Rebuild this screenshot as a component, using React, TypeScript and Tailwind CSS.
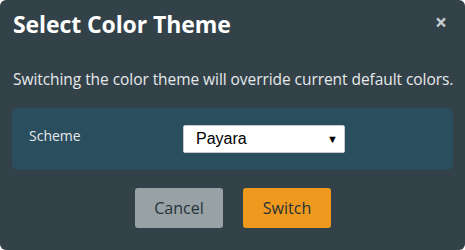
export default function App() {
  return (
    <div className="w-[465px] h-[250px] bg-[#334249] rounded-[6px] overflow-hidden font-['Open_Sans',sans-serif] text-white">
      <div className="flex items-start justify-between pl-[13px] pr-[18px] pt-[8px] h-[58px]">
        <h1 className="text-[23px] font-bold leading-[32px] tracking-[-0.1px]">Select Color Theme</h1>
        <button className="text-[#c8cdd0] text-[21px] font-bold leading-none mt-[4px]">×</button>
      </div>
      <p className="px-[13px] pt-[9px] text-[15.5px] leading-[24px] text-[#e6e9ea] tracking-[-0.06px] whitespace-nowrap">
        Switching the color theme will override current default colors.
      </p>
      <div className="mx-[12px] mt-[17px] h-[62px] rounded-[6px] bg-[#2b4e5e] flex items-center pl-[17px]">
        <span className="w-[154px] text-[14px] text-[#e6e9ea] -mt-[8px]">Scheme</span>
        <div className="w-[162px] h-[28px] bg-white rounded-[2px] border border-[#c9c9c9] flex items-center justify-between pl-[12px] pr-[6px] font-['Liberation_Sans',sans-serif] text-[16px] text-black">
          <span>Payara</span>
          <span className="text-[11px] leading-none">▼</span>
        </div>
      </div>
      <div className="flex justify-center gap-[20px] mt-[18px] pl-[1px]">
        <button className="w-[88px] h-[40px] rounded-[3px] bg-[#97a1a6] text-[#273238] text-[16px]">Cancel</button>
        <button className="w-[88px] h-[40px] rounded-[3px] bg-[#ef991f] text-[#273238] text-[16px]">Switch</button>
      </div>
    </div>
  )
}
